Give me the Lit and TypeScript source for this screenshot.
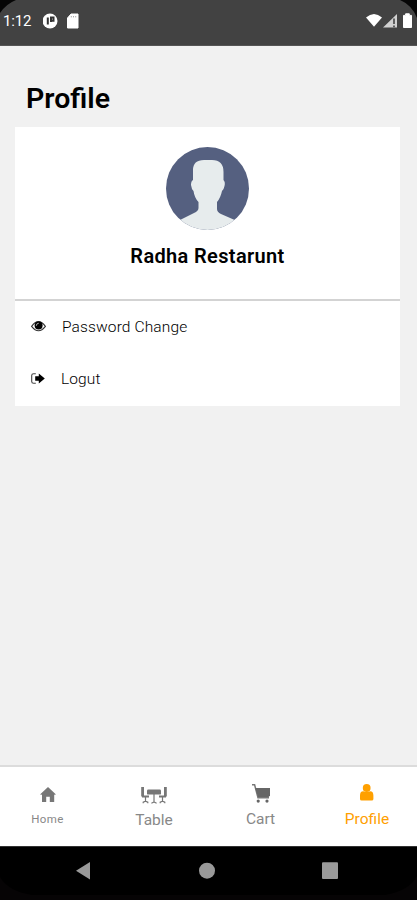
import { LitElement, html, css, svg } from "lit";
import { customElement, property } from "lit/decorators.js";

const icons: Record<string, any> = {
  home: svg`<path fill="#777" d="M8 0L16 7.6 14.2 7.8V15H9.8V9.8H6.2V15H2V7.8L0 7.6Z"/>`,
  table: svg`<g fill="none" stroke="#777"><path stroke-width="2.8" d="M1.6 0V9.4M24.4 0V9.4"/><path stroke-width="2" d="M1 9.6H8M18 9.6H25"/><path stroke-width="1.2" d="M4.5 10V15M2.2 16.2V15.2L4.5 14.2 6.8 15.2V16.2M21.5 10V15M19.2 16.2V15.2L21.5 14.2 23.8 15.2V16.2M13 7V15.5M10.4 16.2L13 15 15.6 16.2"/></g><rect x="6" y="2.6" width="14" height="5" rx="1.2" fill="#777"/>`,
  cart: svg`<path fill="none" stroke="#777" stroke-width="1.5" d="M0 .8H2.6L6 13.8H17"/><path fill="#666" d="M3.2 4H18V11.6L16.6 13H6Z"/><circle cx="6.2" cy="17.1" r="1.6" fill="#666"/><circle cx="15" cy="17.1" r="1.6" fill="#666"/>`,
  user: svg`<circle cx="6.7" cy="4" r="3.9" fill="#ffa000"/><path fill="#ffa000" d="M0 15V11.6Q0 7.3 3.2 7.3Q6.7 8.8 10.2 7.3Q13.4 7.3 13.4 11.6V15Q13.4 16.5 11.8 16.5H1.6Q0 16.5 0 15Z"/>`,
  eye: svg`<path fill="#fff" stroke="#333" stroke-width="1.1" d="M.6 5.3Q7.5-4 14.4 5.3Q7.5 14.2 .6 5.3Z"/><circle cx="7.6" cy="4.5" r="4" fill="#000"/><path fill="none" stroke="#bbb" stroke-width=".9" d="M5.3 4.8Q5.3 2.3 7.8 2.2"/>`,
  exit: svg`<path fill="none" stroke="#444" stroke-width="1.1" d="M4.8.8H2.6Q.7.8.7 2.6V8.4Q.7 10.2 2.6 10.2H4.8"/><path fill="#000" d="M4.2 3.3H7.8V.5L13.8 5.5 7.8 10.5V7.7H4.2Z"/>`,
};

@customElement("app-icon")
class AppIcon extends LitElement {
  @property() name = "home";
  @property({ type: Number }) w = 16;
  @property({ type: Number }) h = 16;
  static styles = css`
    :host { display: block; flex: none; }
    svg { display: block; overflow: visible; }
  `;
  render() {
    return html`<svg width=${this.w} height=${this.h} viewBox="0 0 ${this.w} ${this.h}">${icons[this.name]}</svg>`;
  }
}

@customElement("app-root")
class AppRoot extends LitElement {
  static styles = css`
    :host {
      display: flex; flex-direction: column; width: 417px; height: 900px;
      overflow: hidden; background: #f1f1f1; color: #000;
      font-family: Roboto, "Liberation Sans", sans-serif;
    }
    svg { display: block; flex: none; }
    .status {
      position: relative; box-sizing: border-box; height: 46px; flex: none;
      background: #424242; color: #fff; display: flex; align-items: center;
      padding: 0 4px 3px 3px; border-bottom: 1px solid #555;
    }
    .corner { position: absolute; top: 0; left: 0; }
    .time { font-size: 15px; width: 40px; letter-spacing: -.15px; }
    .signals { margin-left: auto; }
    .page { flex: 1; padding: 35px 17px 0 15px; }
    h1 {
      margin: 0 0 0 11px; height: 46px; line-height: 36px;
      font-size: 28.5px; font-weight: 600;
    }
    .card { background: #fff; height: 279px; }
    .who {
      height: 174px; padding-top: 20px; box-sizing: border-box;
      display: flex; flex-direction: column; align-items: center;
      border-bottom: 2px solid #d3d3d3;
    }
    .name { margin-top: 14px; font-size: 20px; line-height: 24px; font-weight: 600; letter-spacing: .35px; white-space: nowrap; }
    .row { height: 52px; display: flex; align-items: center; padding-left: 16px; color: #000; font-size: 15.5px; font-weight: 300; letter-spacing: .13px; }
    .row span { width: 200px; }
    .lead { width: 31px; padding-bottom: 2px; }
    .lead.short { width: 30px; }
    .tabs {
      height: 79px; flex: none; border-top: 2px solid #dcdcdc; background: #fff;
      display: grid; grid-template-columns: repeat(4, 106.5px); margin-left: -5.75px;
    }
    .tab { display: flex; flex-direction: column; align-items: center; color: #888; font-size: 15.5px; }
    .pic { height: 42px; display: flex; align-items: flex-start; padding-top: 17px; box-sizing: border-box; }
    .label { line-height: 20px; }
    .home .pic, .table .pic { padding-top: 20px; }
    .table .pic { height: 43px; }
    .cart .pic { padding-top: 16.5px; }
    .home .label { font-size: 11.5px; letter-spacing: .4px; }
    .active { color: #ffa000; }
    .keys { height: 53px; flex: none; background: #000; border-top: 1px solid #333; }
  `;
  tab(kind: string, icon: string, w: number, h: number, label: string) {
    return html`<div class="tab ${kind}">
      <div class="pic"><app-icon name=${icon} w=${w} h=${h}></app-icon></div>
      <div class="label">${label}</div>
    </div>`;
  }
  render() {
    return html`
      <header class="status">
        <svg class="corner" width="417" height="24"><path d="M0 0H16Q6 4 0 13ZM400 0H417V18Q412 5 400 0Z" fill="#060606"/></svg>
        <span class="time">1:12</span>
        <svg width="40" height="16" viewBox="0 0 40 16"><circle cx="7" cy="8" r="7.5" fill="#fff"/><path d="M4.8 4.4V11.4M8 9V4.5H10.5V7.8H7.7" fill="none" stroke="#333" stroke-width="2"/><path d="M28 1H35V15H24.5V5Z" fill="#fff" stroke="#fff" stroke-linejoin="round"/><path d="M28.3 3V4.4M30.5 3V4.4M32.7 3V4.4" stroke="#aaa"/></svg>
        <svg class="signals" width="47" height="16" viewBox="0 0 47 16"><path d="M0 4.5Q8-2.5 16 4.5L8 13.8Z" fill="#fff"/><path d="M17 14.5L31 1V14.5Z" fill="#d0d0d0"/><path d="M28 5.5V11M28 12.5V14.3" stroke="#444" stroke-width="1.6"/><path d="M37.5 2.4H39.6V.8H43.3V2.4H45.5V14.5H37.5Z" fill="#fff" stroke="#fff" stroke-linejoin="round"/></svg>
      </header>
      <main class="page">
        <h1>Profile</h1>
        <section class="card">
          <div class="who">
            <svg width="83" height="83" viewBox="0 0 83 83"><defs><clipPath id="disc"><circle cx="41.5" cy="41.5" r="41.5"/></clipPath></defs><g clip-path="url(#disc)"><rect width="83" height="83" fill="#556080"/><path fill="#e7eced" d="M27 33V23Q27 13 38 13H46Q57.5 13 57.5 25V33Q59.5 35 58.5 39Q58 42 56 44Q54.5 51 51 55V62Q51 65 55 67L71 74V83H12V74L28 66Q32.5 64 32.5 61V55Q28.5 51 27.5 44Q25.5 42 25 38Q25 34 27 33Z"/></g></svg>
            <div class="name">Radha Restarunt</div>
          </div>
          <div class="row"><div class="lead"><app-icon name="eye" w="15" h="11"></app-icon></div><span>Password Change</span></div>
          <div class="row"><div class="lead short"><app-icon name="exit" w="14" h="11"></app-icon></div><span>Logut</span></div>
        </section>
      </main>
      <nav class="tabs">
        ${this.tab("home", "home", 16, 15, "Home")}
        ${this.tab("table", "table", 26, 17, "Table")}
        ${this.tab("cart", "cart", 18, 19, "Cart")}
        ${this.tab("active", "user", 13.4, 16.5, "Profile")}
      </nav>
      <footer class="keys">
        <svg width="417" height="53" viewBox="0 847 417 53"><path d="M0 877Q8 891 32 895H385Q409 891 417 876V900H0Z" fill="#060405"/><g fill="#999"><path d="M76 870.7L90 862V879.5Z"/><circle cx="207" cy="870.7" r="8"/><rect x="322" y="862.3" width="16" height="16.7" rx="1"/></g></svg>
      </footer>`;
  }
}
